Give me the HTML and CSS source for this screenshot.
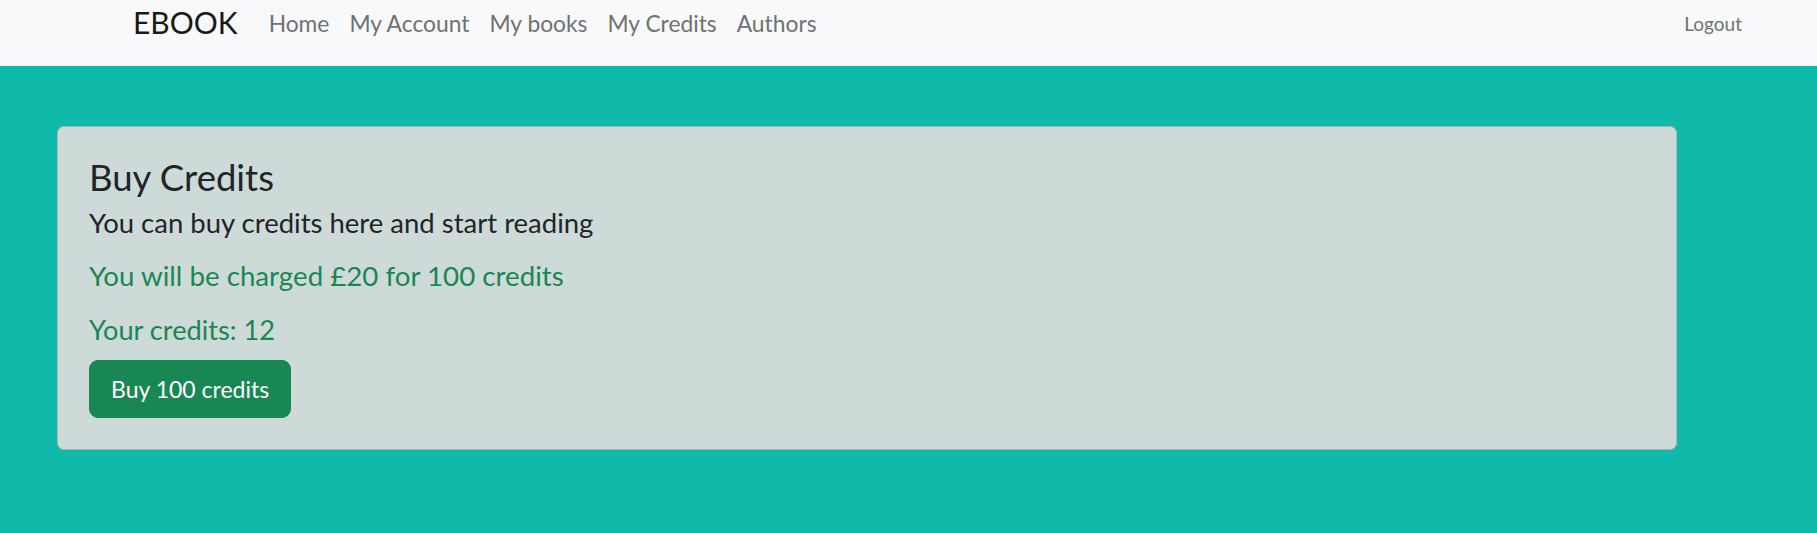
FILE: index.html
```html
<!DOCTYPE html>
<html lang="en">
<head>
<meta charset="utf-8">
<title>EBOOK - Buy Credits</title>
<link rel="stylesheet" href="styles.css">
</head>
<body>
  <nav class="navbar">
    <div class="nav-inner">
      <a class="brand" href="#">EBOOK</a>
      <ul class="nav-links">
        <li><a class="nav-link" href="#">Home</a></li>
        <li><a class="nav-link" href="#">My Account</a></li>
        <li><a class="nav-link" href="#">My books</a></li>
        <li><a class="nav-link" href="#">My Credits</a></li>
        <li><a class="nav-link" href="#">Authors</a></li>
      </ul>
      <a class="logout" href="#">Logout</a>
    </div>
  </nav>
  <main class="main">
    <section class="card">
      <h3 class="card-title">Buy Credits</h3>
      <p class="lead">You can buy credits here and start reading</p>
      <p class="lead success first">You will be charged £20 for 100 credits</p>
      <p class="lead success second">Your credits: 12</p>
      <button class="btn-buy" type="button">Buy 100 credits</button>
    </section>
  </main>
</body>
</html>
```

FILE: styles.css
```css
html, body {
  margin: 0;
  padding: 0;
}

body {
  background: #10baaa;
  font-family: Lato, "Open Sans", "Noto Sans", sans-serif;
  color: #212529;
  min-height: 533px;
}

a {
  text-decoration: none;
}

.navbar {
  background: #f8f9fa;
  height: 66px;
  box-sizing: border-box;
}

.nav-inner {
  display: flex;
  align-items: flex-start;
  padding: 0 65px 0 133px;
  height: 66px;
  box-sizing: border-box;
}

.brand {
  font-size: 30px;
  line-height: 40px;
  color: #19191a;
  margin-right: 21px;
  padding-top: 2px;
}

.nav-links {
  display: flex;
  list-style: none;
  margin: 0;
  padding: 0;
  flex: 1;
}

.nav-link {
  display: block;
  font-size: 22.8px;
  line-height: 32px;
  padding: 7px 10px 0 10px;
  color: #707172;
}

.logout {
  font-size: 19px;
  line-height: 32px;
  padding: 8px 10px 0 10px;
  color: #707172;
}

.main {
  padding: 60px 0 40px 57px;
}

.card {
  width: 1620px;
  box-sizing: border-box;
  background: #cddad8;
  border: 1px solid #a9b5b3;
  border-radius: 7px;
  padding: 29px 31px 31px 31px;
}

.card-title {
  margin: 0 0 7px 0;
  font-size: 36.5px;
  line-height: 42px;
  font-weight: 400;
  color: #212529;
}

.lead {
  margin: 0;
  font-size: 27.5px;
  line-height: 36px;
  font-weight: 400;
}

.success {
  color: #198754;
}

.first {
  margin-top: 17px;
  font-size: 27.7px;
}

.second {
  margin-top: 18px;
  font-size: 27.2px;
}

.btn-buy {
  display: block;
  margin-top: 12px;
  font-family: inherit;
  font-size: 23px;
  line-height: 38px;
  padding: 9px 21px 9px 21px;
  color: #ffffff;
  background: #198754;
  border: 1px solid #198754;
  border-radius: 9px;
  cursor: pointer;
}
```
